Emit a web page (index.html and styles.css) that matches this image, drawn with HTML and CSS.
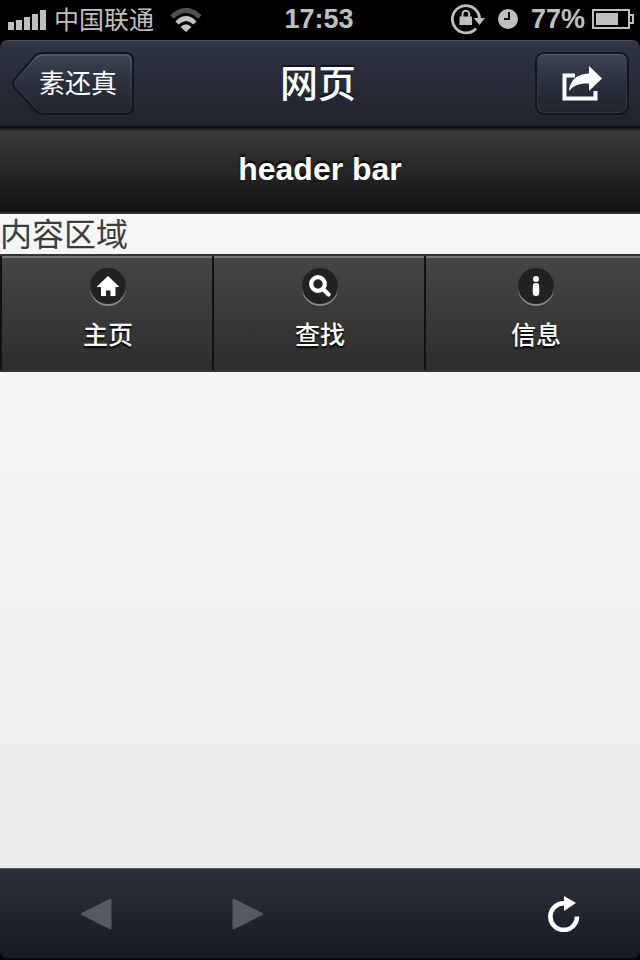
FILE: index.html
```html
<!DOCTYPE html>
<html lang="zh-CN">
<head>
<meta charset="utf-8">
<meta name="viewport" content="width=device-width, initial-scale=1">
<title>网页</title>
<link rel="stylesheet" href="styles.css">
</head>
<body>
<div class="status">
  <div class="status-left">
    <svg width="38" height="20" viewBox="0 0 38 20" fill="#bfbfbf" aria-hidden="true"><path d="M0 12h6v8H0zM8 10h6v10H8zM16 7h6v13h-6zM24 4h6v16h-6zM32 0h6v20h-6z"/></svg>
    <span class="carrier">中国联通</span>
    <svg class="wifi" width="32" height="24" viewBox="0 0 32 24" fill="none" aria-hidden="true"><path d="M2 9Q16-4 30 9" stroke="#505050" stroke-width="5"/><path d="M7 15Q16 6 25 15" stroke="#c4c4c4" stroke-width="4.500"/><path d="M10.500 19Q16 13.500 21.500 19L16 24Z" fill="#c4c4c4"/></svg>
  </div>
  <time class="clock">17:53</time>
  <div class="status-right">
    <svg width="34" height="32" viewBox="0 0 34 32" aria-hidden="true"><path d="M25 25.500A13.600 13.600 0 1 1 27.500 11Q28.500 13 28.500 16" fill="none" stroke="#bfbfbf" stroke-width="2.800"/><path d="M22.500 15h11.500l-5.500 7z" fill="#bfbfbf"/><path d="M8.500 13.500h12.500v8.500H8.500z" fill="#bfbfbf"/><path d="M11.500 14v-3a3.300 3.300 0 0 1 6.600 0V14" fill="none" stroke="#bfbfbf" stroke-width="2"/></svg>
    <svg width="20" height="20" viewBox="0 0 20 20" aria-hidden="true"><circle cx="10" cy="10" r="10" fill="#bfbfbf"/><path d="M11 3v7H6" fill="none" stroke="#111" stroke-width="2"/></svg>
    <span class="percent">77%</span>
    <svg width="42" height="20" viewBox="0 0 42 20" aria-hidden="true"><path d="M1 1h36v18H1zM37 6h4v8h-4" fill="none" stroke="#bfbfbf" stroke-width="2"/><path d="M4 4h22v12H4z" fill="#bfbfbf"/></svg>
  </div>
</div>
<header class="nav">
  <div><button class="back" type="button">
    <svg class="back-shape" width="124" height="64" viewBox="0 0 126 64" preserveAspectRatio="none" aria-hidden="true">
      <defs><linearGradient id="fill" x1="0" y1="0" x2="0" y2="1"><stop offset="0" stop-color="#3d4453"/><stop offset=".5" stop-color="#2a303c"/><stop offset="1" stop-color="#1f242d"/></linearGradient>
      <linearGradient id="shine" x1="0" y1="0" x2="0" y2="1"><stop offset="0" stop-color="#646b7a"/><stop offset=".4" stop-color="#3b4250"/><stop offset="1" stop-color="#272d38"/></linearGradient></defs>
      <path d="M25 3Q28 1 32 1H117Q124 1 124 8V55Q124 62 117 62H32Q28 62 25 59L4 36Q0 31 4 27Z" fill="url(#fill)" stroke="#12161e" stroke-width="2"/>
      <path d="M26 5Q29 3 33 3H116Q122 3 122 9V54Q122 60 116 60H33Q29 60 26 57L5 35Q2 31 5 28Z" fill="none" stroke="url(#shine)"/>
    </svg>
    <span class="back-label">素还真</span>
  </button></div>
  <h1 class="title">网页</h1>
  <div class="nav-end"><button class="share" type="button" aria-label="分享">
    <svg width="42" height="36" viewBox="0 0 42 36" aria-hidden="true"><path d="M14 9.500H3.500V32.500H34.500V25" fill="none" stroke="#fff" stroke-width="4"/><path d="M28 0L41 12.500 28 25V17.500C19 17 13 19 8 25 9 14 16 8 28 7.500Z" fill="#fff"/></svg>
  </button></div>
</header>
<main class="page">
  <h2 class="page-header">header bar</h2>
  <div class="content">内容区域</div>
  <nav class="tabs">
    <a class="tab" href="#home"><span class="disc"><svg width="22" height="20" viewBox="0 0 22 20" fill="#fff" aria-hidden="true"><path d="M11 0L22 10.500V11H18.500V20H13.500V14.500H9V20H4V11H0V10.500Z"/></svg></span>主页</a>
    <a class="tab" href="#search"><span class="disc"><svg width="22" height="22" viewBox="0 0 22 22" fill="none" stroke="#fff" aria-hidden="true"><circle cx="9" cy="9" r="6.800" stroke-width="4.200"/><path d="M14 14L19.500 19.500" stroke-width="4.200" stroke-linecap="round"/></svg></span>查找</a>
    <a class="tab" href="#info"><span class="disc"><svg width="8" height="20" viewBox="0 0 8 20" fill="#fff" aria-hidden="true"><circle cx="4" cy="3" r="3"/><rect x=".8" y="7" width="6.400" height="13" rx="3"/></svg></span>信息</a>
  </nav>
</main>
<footer class="toolbar">
  <button class="tool" type="button" aria-label="后退"><svg width="32" height="32" viewBox="0 0 32 32" aria-hidden="true"><path d="M1.500 15L29 1.200Q31.500 0 31.500 2V30Q31.500 32 29 30.800L1.500 17Q0 16 1.500 15Z" fill="#56595f"/></svg></button>
  <button class="tool" type="button" aria-label="前进"><svg width="32" height="32" viewBox="0 0 32 32" aria-hidden="true"><path d="M30.500 15L3 1.200Q.5 0 .5 2V30Q.5 32 3 30.800L30.500 17Q32 16 30.500 15Z" fill="#56595f"/></svg></button>
  <button class="tool reload" type="button" aria-label="刷新"><svg width="32" height="36" viewBox="0 0 32 36" aria-hidden="true"><path d="M29 20.500A13.300 13.300 0 1 1 16.500 7.300" fill="none" stroke="#fff" stroke-width="4.600"/><path d="M16 0L28 7 16 15Z" fill="#fff"/></svg></button>
</footer>
</body>
</html>
```
FILE: styles.css
```css
* { box-sizing: border-box; }

body {
  margin: 0;
  min-height: 100vh;
  display: flex;
  flex-direction: column;
  background: #000;
  font-family: "Liberation Sans", "Noto Sans CJK SC", sans-serif;
}

svg { display: block; flex: none; }

button {
  margin: 0;
  padding: 0;
  border: 0;
  background: none;
  color: inherit;
  font: inherit;
}

.status {
  height: 40px;
  padding: 0 6px 2px 8px;
  display: grid;
  grid-template-columns: 1fr auto 1fr;
  align-items: center;
  color: #bfbfbf;
  font-size: 27px;
  line-height: 32px;
}

.status-left, .status-right { display: flex; align-items: center; }
.status-left { padding-top: 1px; }
.status-right { justify-content: flex-end; }
.carrier { margin: 0 16px 0 8px; font-size: 25px; }
.clock { margin-right: 4px; }
.clock, .percent { font-weight: bold; }
.percent { margin: 0 7px 0 13px; }
.status-right svg + svg { margin-left: 13px; }

.nav {
  height: 88px;
  padding: 0 11px;
  display: grid;
  grid-template-columns: 1fr auto 1fr;
  align-items: center;
  border-top: 1px solid #4b515d;
  border-bottom: 2px solid #090c14;
  border-radius: 8px 8px 0 0;
  background: linear-gradient(#2f3541, #1e232d);
  color: #fff;
  text-shadow: 0 -2px 1px #10141c;
}

.title { margin: 0 4px 0 0; font-size: 38px; line-height: 48px; font-weight: 500; }
.nav-end { display: flex; justify-content: flex-end; }

.back {
  position: relative;
  display: block;
  width: 124px;
  height: 64px;
  padding-left: 28px;
  text-align: left;
  font-size: 26px;
  line-height: 64px;
}

.back-shape { position: absolute; inset: 0; }
.back-label { position: relative; }

.share {
  width: 94px;
  height: 63px;
  display: flex;
  align-items: center;
  justify-content: center;
  border: 2px solid #12161e;
  border-radius: 9px;
  background: linear-gradient(#3d4453, #2a303c 50%, #1f242d);
  box-shadow: inset 0 1px #5a6170, inset 0 0 0 1px #303642;
}

.page {
  flex: 1;
  background: linear-gradient(#f9f9f9, #ececec);
}

.page-header {
  margin: 0;
  padding: 19px 20px 21px;
  border-bottom: 2px solid #333;
  background: linear-gradient(#3c3c3c, #111);
  box-shadow: inset 0 3px 2px -1px #191919;
  color: #fff;
  font-size: 32px;
  line-height: 44px;
  text-align: center;
  text-shadow: 0 -2px 2px #000;
}

.content {
  padding-top: 2px;
  color: #3c3c3c;
  font-size: 32px;
  line-height: 38px;
}

.tabs {
  display: grid;
  grid-template-columns: 212fr 212fr 216fr;
  border-top: 2px solid #333;
  border-bottom: 2px solid #333;
  background: #333;
}

.tab {
  display: flex;
  flex-direction: column;
  align-items: center;
  gap: 14px;
  padding: 12px 0 18px 2px;
  border-left: 2px solid #111;
  background: linear-gradient(#464646, #2d2d2d);
  box-shadow: inset 0 2px #777;
  color: #fff;
  font-size: 25px;
  line-height: 34px;
  font-weight: 500;
  text-decoration: none;
  text-shadow: 0 2px 2px #000;
}

.tab:last-child { padding-left: 6px; }

.disc {
  width: 36px;
  height: 36px;
  display: flex;
  align-items: center;
  justify-content: center;
  border-radius: 50%;
  background: #222;
  box-shadow: 0 2px #888;
}

.toolbar {
  height: 92px;
  padding: 0 60px 0 80px;
  display: flex;
  align-items: center;
  gap: 120px;
  border-top: 1px solid #565a63;
  border-bottom: 2px solid #05060d;
  border-radius: 0 0 8px 8px;
  background: linear-gradient(#2a303b, #171a20);
}

.reload { margin-left: auto; }
```
